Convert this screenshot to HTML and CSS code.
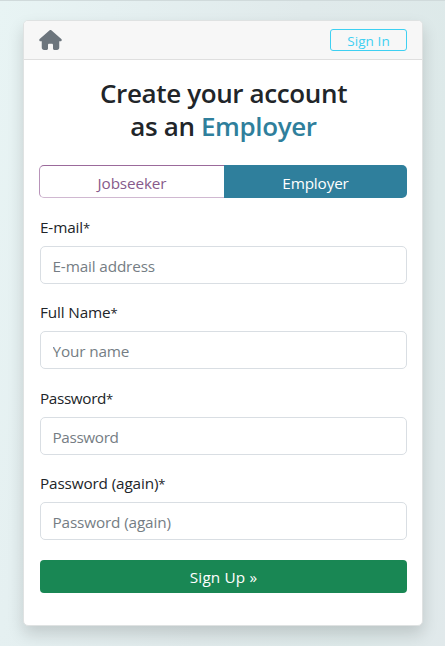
FILE: index.html
```html
<!DOCTYPE html>
<html lang="en">
<head>
<meta charset="utf-8">
<title>Create your account</title>
<link rel="stylesheet" href="styles.css">
</head>
<body>
<main class="card">
  <header class="card-header">
    <a class="home" aria-label="Home">
      <svg width="23" height="20" viewBox="0 0 576 512"><path fill="currentColor" d="M575.8 255.5c0 18-15 32.1-32 32.1h-32l.7 160.2c.2 35.500-25.500 64.200-58.500 64.200H392c-22.100 0-40-17.900-40-40v-88c0-17.700-14.300-32-32-32h-64c-17.700 0-32 14.300-32 32v88c0 22.100-17.900 40-40 40h-60c-33 0-60-27-60-64V287.600H32c-18 0-32-14-32-32.100 0-9 3-17 10-24L266.400 8c7-7 15-8 22-8s15 2 21 7l255.400 224.500c8 7 12 15 11 24z"/></svg>
    </a>
    <a class="btn-signin">Sign In</a>
  </header>
  <form class="card-body">
    <h1 class="title">Create your account<br>as an <span class="accent">Employer</span></h1>
    <div class="tabs">
      <a class="tab">Jobseeker</a>
      <a class="tab tab-active">Employer</a>
    </div>
    <div class="field"><label for="email">E-mail<span class="req">*</span></label><input id="email" type="email" placeholder="E-mail address"></div>
    <div class="field"><label for="name">Full Name<span class="req">*</span></label><input id="name" type="text" placeholder="Your name"></div>
    <div class="field"><label class="tight" for="pw">Password<span class="req">*</span></label><input id="pw" class="tight" type="password" placeholder="Password"></div>
    <div class="field"><label for="pw2">Password (again)<span class="req">*</span></label><input id="pw2" type="password" placeholder="Password (again)"></div>
    <button class="submit" type="button">Sign Up »</button>
  </form>
</main>
</body>
</html>
```
FILE: styles.css
```css
* { box-sizing: border-box; }
body {
  margin: 0;
  height: 646px;
  overflow: hidden;
  padding: 19px 22px 0 23px;
  border-top: 1px solid #d0dadb;
  background: linear-gradient(100deg, #e8f4f4 0%, #e5f0f1 20%, #e0eaeb 55%, #dde9e9 85%, #e1e9eb 100%);
  font-family: "Segoe UI", "Open Sans", "Noto Sans", sans-serif;
  font-size: 15.3px;
  letter-spacing: -0.14px;
  color: #212529;
}
.card {
  height: 606px;
  background: #fff;
  border: 1px solid #dfe2e2;
  border-radius: 5px;
  box-shadow: 0 8px 16px rgba(0, 0, 0, .15);
}
.card-header {
  display: flex;
  align-items: center;
  justify-content: space-between;
  height: 39px;
  padding: 0 15px;
  background: #f7f7f7;
  border-bottom: 1px solid #dfdfdf;
  border-radius: 4px 4px 0 0;
}
.home { color: #6c757d; display: flex; }
.btn-signin {
  width: 77px;
  height: 22px;
  border: 1px solid #3ed0f2;
  border-radius: 3px;
  color: #3ed0f2;
  font-size: 13.5px;
  letter-spacing: 0.1px;
  line-height: 22px;
  text-align: center;
}
.card-body { padding: 17px 15px 0 16px; }
.title {
  margin: 0 0 22px;
  font-size: 26px;
  font-weight: 600;
  line-height: 33px;
  letter-spacing: -0.37px;
  text-align: center;
}
.accent { color: #2f7f9c; }
.tabs { display: flex; height: 33px; margin: 0 0 17px -1px; }
.tab {
  flex: 1;
  border-style: solid;
  border-width: 1px 0 1px 1px;
  border-color: #9b6a9b #9b6a9b #d0b8d1 #b893b9;
  border-radius: 5px 0 0 5px;
  color: #875a8b;
  line-height: 34px;
  text-align: center;
}
.tab-active {
  flex: 0 0 183px;
  border: 0;
  border-radius: 0 5px 5px 0;
  background: #2f7f9c;
  color: #fff;
  line-height: 36px;
}
.field { height: 85.400px; }
.field label { display: block; height: 31px; line-height: 25px; }
.req { font-size: 13px; }
.field input {
  display: block;
  width: 100%;
  height: 38px;
  padding: 2px 12px 0 11.5px;
  border: 1px solid #d9dee3;
  border-radius: 5px;
  outline: 0;
  font: inherit;
  letter-spacing: inherit;
}
.field .tight { letter-spacing: -0.36px; }
.field input::placeholder { color: #757d84; opacity: 1; }
.submit {
  display: block;
  width: 100%;
  height: 33px;
  margin-top: 3px;
  padding: 2px 0 0;
  border: 0;
  border-radius: 4px;
  background: #198754;
  color: #fff;
  font: inherit;
  letter-spacing: 0.15px;
}
```
